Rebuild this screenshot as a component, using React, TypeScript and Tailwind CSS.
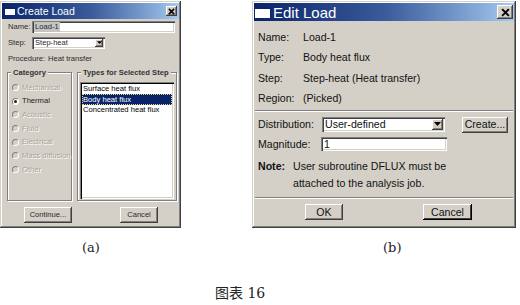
import React from "react"

const raised =
  "bg-[#d4d0c8] shadow-[inset_-1px_-1px_#404040,inset_1px_1px_#ffffff,inset_-2px_-2px_#808080]"
const sunken =
  "bg-white shadow-[inset_1px_1px_#808080,inset_2px_2px_#404040,inset_-1px_-1px_#ffffff,inset_-2px_-2px_#d4d0c8]"
const frame =
  "bg-[#d4d0c8] shadow-[inset_-1px_-1px_#404040,inset_1px_1px_#d4d0c8,inset_-2px_-2px_#808080,inset_2px_2px_#ffffff]"
const titleGrad = "bg-gradient-to-r from-[#0a246a] via-[#3a5a9a] to-[#a6caf0]"

function CloseBtn({ w, h, s }: { w: string; h: string; s: number }) {
  return (
    <div className={`${raised} ${w} ${h} flex items-center justify-center`}>
      <svg width={s} height={s} viewBox="0 0 8 8">
        <path d="M1 1 L7 7 M7 1 L1 7" stroke="#000" strokeWidth="1.8" />
      </svg>
    </div>
  )
}

function Arrow({ w, h, s }: { w: string; h: string; s: number }) {
  return (
    <div className={`${raised} ${w} ${h} flex items-center justify-center`}>
      <svg width={s} height={s / 2 + 1} viewBox="0 0 8 5">
        <path d="M0 0 L8 0 L4 4.5 Z" fill="#000" />
      </svg>
    </div>
  )
}

function Radio({ label, checked }: { label: string; checked?: boolean }) {
  return (
    <div className="flex h-[13.7px] items-center">
      <div
        className={`ml-[4px] flex h-[7px] w-[7px] items-center justify-center rounded-full border border-t-[#808080] border-l-[#808080] border-r-[#ffffff] border-b-[#ffffff] ${
          checked ? "bg-white" : "bg-[#d4d0c8]"
        }`}
      >
        {checked && <div className="h-[3px] w-[3px] rounded-full bg-[#222]" />}
      </div>
      <span
        className={`ml-[3px] ${
          checked ? "text-[#222]" : "text-[#a8a49c] [text-shadow:1px_1px_#ffffff]"
        }`}
      >
        {label}
      </span>
    </div>
  )
}

function CreateLoad() {
  const cats = ["Mechanical", "Thermal", "Acoustic", "Fluid", "Electrical", "Mass diffusion", "Other"]
  return (
    <div
      className={`${frame} mt-[1px] flex h-[227px] w-[181px] flex-col p-[2px] text-[7.6px] leading-none text-[#2a2a2a]`}
    >
      <div className={`${titleGrad} flex h-[16px] items-center`}>
        <div className="ml-[3px] h-[8px] w-[10px] border-t-2 border-[#0a246a] bg-white" />
        <span className="ml-[2px] text-[10.5px] text-white">Create Load</span>
        <div className="ml-auto mr-[2px]">
          <CloseBtn w="w-[11px]" h="h-[10px]" s={7} />
        </div>
      </div>

      <div className="mt-[2px] flex h-[12px] items-center pl-[6px]">
        <span className="w-[24px]">Name:</span>
        <div className={`${sunken} flex h-[12px] w-[143px] items-center pl-[2px]`}>
          <span className="bg-[#c4c4c4] px-[1px] py-[1px]">Load-1</span>
        </div>
      </div>

      <div className="mt-[4px] flex h-[12px] items-center pl-[6px]">
        <span className="w-[24px]">Step:</span>
        <div className={`${sunken} flex h-[12px] w-[73px] items-center pl-[3px] pr-[2px]`}>
          <span>Step-heat</span>
          <div className="ml-auto">
            <Arrow w="w-[8px]" h="h-[8px]" s={5} />
          </div>
        </div>
      </div>

      <div className="mt-[4px] flex h-[12px] items-center pl-[6px]">
        <span className="w-[40px]">Procedure:</span>
        <span>Heat transfer</span>
      </div>

      <div className="mt-[4px] flex gap-[5px] pl-[5px]">
        <fieldset className="h-[132px] w-[65px] border border-[#808080] shadow-[inset_1px_1px_#ffffff,1px_1px_#ffffff]">
          <legend className="ml-[3px] bg-[#d4d0c8] px-[2px] font-bold text-[#333]">Category</legend>
          <div className="pt-[4px]">
            {cats.map((c) => (
              <Radio key={c} label={c} checked={c === "Thermal"} />
            ))}
          </div>
        </fieldset>
        <fieldset className="flex h-[132px] w-[100px] flex-col border border-[#808080] shadow-[inset_1px_1px_#ffffff,1px_1px_#ffffff]">
          <legend className="ml-[3px] bg-[#d4d0c8] px-[2px] font-bold text-[#333]">
            Types for Selected Step
          </legend>
          <div className="mx-[2px] mt-[5px] mb-[1px] flex-1 bg-white p-[2px] text-black shadow-[inset_1px_1px_#808080,inset_2px_2px_#000000,inset_-1px_-1px_#ffffff,inset_-2px_-2px_#d4d0c8]">
            <div className="flex h-[10.5px] items-center pl-[1px]">Surface heat flux</div>
            <div className="flex h-[10.5px] items-center border border-dotted border-[#e8d890] bg-[#0a246a] text-white">
              Body heat flux
            </div>
            <div className="flex h-[10.5px] items-center pl-[1px]">Concentrated heat flux</div>
          </div>
        </fieldset>
      </div>

      <div className="mt-[6px] flex items-center">
        <div className={`${raised} ml-[22px] flex h-[16px] w-[48px] items-center justify-center`}>
          Continue...
        </div>
        <div className={`${raised} ml-[48px] flex h-[16px] w-[38px] items-center justify-center`}>
          Cancel
        </div>
      </div>
    </div>
  )
}

function EditLoad() {
  const rows = [
    ["Name:", "Load-1"],
    ["Type:", "Body heat flux"],
    ["Step:", "Step-heat (Heat transfer)"],
    ["Region:", "(Picked)"],
  ]
  return (
    <div
      className={`${frame} mt-[1px] ml-[71px] flex h-[227px] w-[264px] flex-col p-[2px] text-[10.6px] leading-none text-[#111]`}
    >
      <div className={`${titleGrad} flex h-[18px] items-center`}>
        <div className="ml-[1px] h-[11px] w-[15px] border-t-2 border-[#0a246a] bg-white" />
        <span className="ml-[3px] text-[15px] text-white">Edit Load</span>
        <div className="ml-auto mr-[1px]">
          <CloseBtn w="w-[16px]" h="h-[14px]" s={9} />
        </div>
      </div>

      <div className="pt-[6px]">
        {rows.map(([k, v]) => (
          <div key={k} className="flex h-[20.5px] items-center pl-[4px]">
            <span className="w-[45px]">{k}</span>
            <span>{v}</span>
          </div>
        ))}
      </div>

      <div className="mx-[1px] mt-[1px] h-[2px] border-t border-b border-t-[#808080] border-b-white" />

      <div className="mt-[4px] flex h-[17px] items-center pl-[4px]">
        <span className="w-[64px]">Distribution:</span>
        <div className={`${sunken} flex h-[15px] w-[123px] items-center pl-[3px] pr-[2px]`}>
          <span>User-defined</span>
          <div className="ml-auto">
            <Arrow w="w-[11px]" h="h-[11px]" s={7} />
          </div>
        </div>
        <div className={`${raised} ml-[17px] flex h-[16px] w-[46px] items-center justify-center`}>
          Create...
        </div>
      </div>

      <div className="mt-[4px] flex h-[14px] items-center pl-[4px]">
        <span className="w-[63px]">Magnitude:</span>
        <div className={`${sunken} flex h-[14px] w-[126px] items-center pl-[3px]`}>
          <span>1</span>
        </div>
      </div>

      <div className="mt-[7px] flex pl-[4px] leading-[17px]">
        <span className="w-[35px] font-bold">Note:</span>
        <span>
          User subroutine DFLUX must be
          <br />
          attached to the analysis job.
        </span>
      </div>

      <div className="mx-[1px] mt-[5px] h-[2px] border-t border-b border-t-[#808080] border-b-white" />

      <div className="mt-[5px] flex items-center">
        <div className={`${raised} ml-[51px] flex h-[16px] w-[38px] items-center justify-center`}>
          OK
        </div>
        <div className="ml-[80px] flex h-[16px] w-[49px] items-center justify-center bg-[#d4d0c8] shadow-[inset_-1px_-1px_#000000,inset_1px_1px_#ffffff,inset_-2px_-2px_#404040]">
          Cancel
        </div>
      </div>
    </div>
  )
}

export default function App() {
  return (
    <div className="flex h-[305px] w-[520px] flex-col bg-white font-['Liberation_Sans',Arial,sans-serif]">
      <div className="flex items-start">
        <CreateLoad />
        <EditLoad />
      </div>
      <div className="mt-[12px] flex font-['DejaVu_Serif',serif] text-[13px] leading-[16px] text-[#222]">
        <span className="ml-[82px] w-[18px]">(a)</span>
        <span className="ml-[283px]">(b)</span>
      </div>
      <div className="mt-[28px] flex font-['DejaVu_Serif','Noto_Sans_CJK_SC',serif] text-[14px] leading-[18px] text-[#222]">
        <span className="ml-[215px]">图表 16</span>
      </div>
    </div>
  )
}
